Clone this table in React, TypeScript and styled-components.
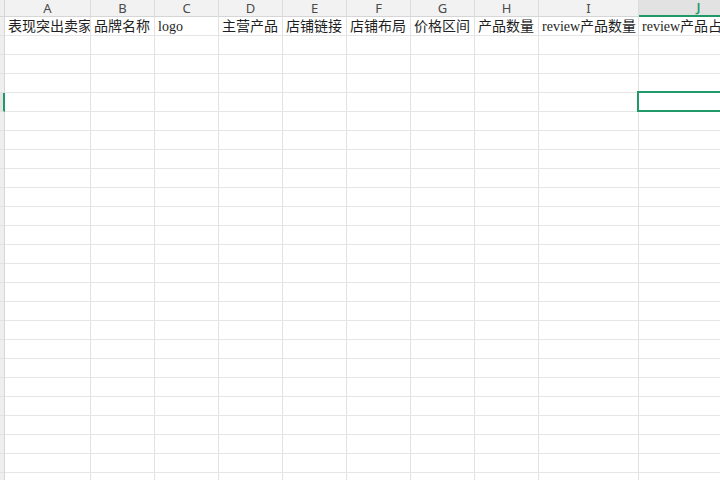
import React from "react";
import styled, { createGlobalStyle, css } from "styled-components";

const GREEN = "#1f9968";

const Global = createGlobalStyle`
  html, body { margin: 0; padding: 0; background: #ffffff; }
  body { width: 720px; height: 480px; overflow: hidden; }
`;

const COLS = ["A", "B", "C", "D", "E", "F", "G", "H", "I", "J", "K"];
const WIDTHS = [86, 64, 64, 64, 64, 64, 64, 64, 100, 120, 64];
const HEADERS = [
  "表现突出卖家",
  "品牌名称",
  "logo",
  "主营产品",
  "店铺链接",
  "店铺布局",
  "价格区间",
  "产品数量",
  "review产品数量",
  "review产品占比",
  "",
];
const ROW_COUNT = 25;
const ACTIVE_ROW = 4;
const ACTIVE_COL = 9;

const Viewport = styled.div`
  width: 720px;
  height: 480px;
  overflow: hidden;
  background: #ffffff;
`;

const Sheet = styled.div<{ $template: string }>`
  display: grid;
  grid-template-columns: ${(p) => p.$template};
  grid-template-rows: 17px;
  grid-auto-rows: 19px;
  width: max-content;
`;

const Corner = styled.div`
  background: #efefef;
  border-right: 1px solid #d6d6d6;
  border-bottom: 1px solid #d6d6d6;
  box-sizing: border-box;
`;

const ColHead = styled.div<{ $active?: boolean }>`
  box-sizing: border-box;
  text-align: center;
  font-family: "Noto Sans", "Liberation Sans", sans-serif;
  font-size: 13px;
  line-height: 16px;
  color: #4a4a4a;
  background: #f2f2f2;
  border-right: 1px solid #dcdcdc;
  border-bottom: 1px solid #d6d6d6;
  ${(p) =>
    p.$active &&
    css`
      background: #e2e2e2;
      color: ${GREEN};
      font-weight: 600;
      border-bottom: 2px solid ${GREEN};
      line-height: 15px;
    `}
`;

const RowHead = styled.div<{ $active?: boolean }>`
  box-sizing: border-box;
  background: #efefef;
  border-right: 1px solid #d6d6d6;
  border-bottom: 1px solid #e2e2e2;
  ${(p) =>
    p.$active &&
    css`
      background: #e4e4e4;
      border-right: 2px solid ${GREEN};
    `}
`;

const Cell = styled.div<{ $selected?: boolean }>`
  position: relative;
  box-sizing: border-box;
  border-right: 1px solid #e1e1e1;
  border-bottom: 1px solid #e6e6e6;
  padding: 0 0 0 3px;
  overflow: hidden;
  white-space: nowrap;
  font-family: "Liberation Serif", "Noto Sans CJK SC", serif;
  font-size: 14px;
  line-height: 19px;
  color: #1f1f1f;
  ${(p) =>
    p.$selected &&
    css`
      overflow: visible;
      &::after {
        content: "";
        position: absolute;
        left: -2px;
        top: -2px;
        right: -1px;
        bottom: -1px;
        border: 2px solid ${GREEN};
        pointer-events: none;
      }
    `}
`;

export default function App() {
  const template = ["5px", ...WIDTHS.map((w) => `${w}px`)].join(" ");
  const rows = Array.from({ length: ROW_COUNT }, (_, i) => i);
  return (
    <Viewport>
      <Global />
      <Sheet $template={template}>
        <Corner />
        {COLS.map((c, ci) => (
          <ColHead key={c} $active={ci === ACTIVE_COL}>
            {c}
          </ColHead>
        ))}
        {rows.map((r) => (
          <React.Fragment key={r}>
            <RowHead $active={r === ACTIVE_ROW} />
            {COLS.map((c, ci) => (
              <Cell key={c} $selected={r === ACTIVE_ROW && ci === ACTIVE_COL}>
                {r === 0 ? HEADERS[ci] : null}
              </Cell>
            ))}
          </React.Fragment>
        ))}
      </Sheet>
    </Viewport>
  );
}
